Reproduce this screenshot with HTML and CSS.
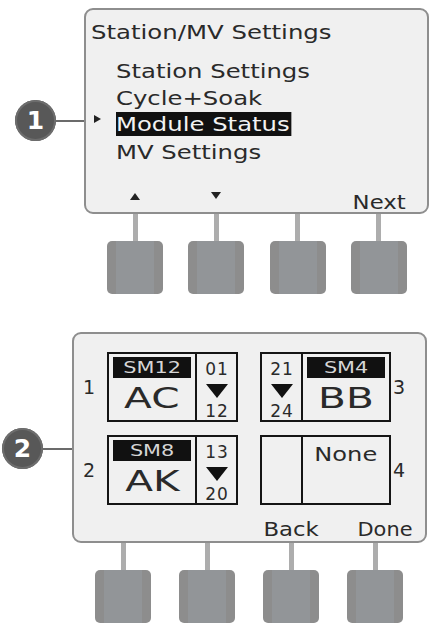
FILE: index.html
```html
<!DOCTYPE html>
<html lang="en">
<head>
  <meta charset="UTF-8">
  <title>Module Status</title>
  <link rel="stylesheet" href="styles.css">
</head>
<body>

  <div class="panel panel-menu">
    <div class="callout">
      <span class="callout-num">1</span>
      <span class="callout-line"></span>
    </div>
    <div class="unit">
      <div class="screen screen-menu">
        <div class="screen-title"><span>Station/MV Settings</span></div>
        <ul class="menu">
          <li><span class="menu-text">Station Settings</span></li>
          <li><span class="menu-text">Cycle+Soak</span></li>
          <li class="selected"><span class="menu-text">Module Status</span></li>
          <li><span class="menu-text">MV Settings</span></li>
        </ul>
        <div class="softkeys">
          <span class="softkey"><i class="tri-up"></i></span>
          <span class="softkey"><i class="tri-down"></i></span>
          <span class="softkey"></span>
          <span class="softkey"><span class="softkey-text">Next</span></span>
        </div>
      </div>
      <div class="keys">
        <div class="key"></div>
        <div class="key"></div>
        <div class="key"></div>
        <div class="key"></div>
      </div>
    </div>
  </div>

  <div class="panel panel-modules">
    <div class="callout">
      <span class="callout-num">2</span>
      <span class="callout-line"></span>
    </div>
    <div class="unit">
      <div class="screen screen-modules">
        <div class="mod-row">
          <span class="slot-num">1</span>
          <div class="mod">
            <div class="mod-main">
              <div class="mod-label"><span>SM12</span></div>
              <div class="mod-code"><span>AC</span></div>
            </div>
            <div class="mod-range"><span>01</span><i class="tri-range"></i><span>12</span></div>
          </div>
          <div class="mod mod-flip">
            <div class="mod-range"><span>21</span><i class="tri-range"></i><span>24</span></div>
            <div class="mod-main">
              <div class="mod-label"><span>SM4</span></div>
              <div class="mod-code"><span>BB</span></div>
            </div>
          </div>
          <span class="slot-num slot-num-right">3</span>
        </div>
        <div class="mod-row">
          <span class="slot-num">2</span>
          <div class="mod">
            <div class="mod-main">
              <div class="mod-label"><span>SM8</span></div>
              <div class="mod-code"><span>AK</span></div>
            </div>
            <div class="mod-range"><span>13</span><i class="tri-range"></i><span>20</span></div>
          </div>
          <div class="mod mod-flip">
            <div class="mod-range"></div>
            <div class="mod-main">
              <div class="mod-none"><span>None</span></div>
            </div>
          </div>
          <span class="slot-num slot-num-right">4</span>
        </div>
        <div class="softkeys">
          <span class="softkey"></span>
          <span class="softkey"></span>
          <span class="softkey"><span class="softkey-text">Back</span></span>
          <span class="softkey softkey-shift"><span class="softkey-text">Done</span></span>
        </div>
      </div>
      <div class="keys">
        <div class="key"></div>
        <div class="key"></div>
        <div class="key"></div>
        <div class="key"></div>
      </div>
    </div>
  </div>

</body>
</html>
```

FILE: styles.css
```css
body {
  margin: 0;
  padding-top: 8px;
  background: #fff;
  font-family: "DejaVu Sans", Verdana, sans-serif;
  color: #2a2a2a;
}
.panel {
  display: flex;
  align-items: flex-start;
}
.panel-menu {
  padding-left: 15px;
}
.panel-modules {
  padding-left: 2px;
  margin-top: 38px;
}

/* numbered callouts */
.callout {
  display: flex;
  align-items: center;
  margin-top: 92px;
}
.panel-modules .callout {
  margin-top: 96px;
}
.callout-num {
  width: 41px;
  height: 41px;
  border-radius: 50%;
  background: #585858;
  box-shadow: inset 0 0 0 2px #6d6d6d;
  color: #fff;
  font-weight: bold;
  font-size: 25px;
  display: flex;
  align-items: center;
  justify-content: center;
}
.callout-line {
  width: 28px;
  height: 2px;
  background: #6b6b6b;
}
.panel-modules .callout-line {
  width: 29px;
}

/* lcd screen - the lcd font is wide, so text is stretched */
.unit {
  width: 345px;
}
.panel-modules .unit {
  width: 355px;
}
.screen {
  box-sizing: border-box;
  border: 2px solid #8e8e8e;
  border-radius: 9px;
  background: #f0f0f0;
  display: flex;
  flex-direction: column;
}
.screen-menu {
  height: 206px;
  padding-top: 10px;
}
.screen-modules {
  height: 211px;
  padding: 18px 0 2px;
}
.screen-title {
  padding-left: 5px;
  font-size: 20px;
  line-height: 24px;
}
.screen-title span {
  display: inline-block;
  transform: scaleX(1.22);
  transform-origin: left center;
}
.menu {
  list-style: none;
  margin: 14px 0 0;
  padding: 0;
}
.menu li {
  display: flex;
  align-items: flex-start;
  height: 27px;
  line-height: 27px;
  padding-left: 30px;
  font-size: 19px;
}
.menu-text {
  transform: scaleX(1.28);
  transform-origin: left center;
}
.menu li.selected::before {
  content: "";
  margin: 3px 15px 0 -22px;
  border-left: 7px solid #222;
  border-top: 4px solid transparent;
  border-bottom: 4px solid transparent;
}
.menu li.selected .menu-text {
  background: #111;
  color: #f2f2f2;
  line-height: 23px;
  padding: 1px 1px 0 0;
}

/* soft key labels */
.softkeys {
  margin-top: auto;
  display: flex;
  justify-content: space-between;
  padding: 0 20px 0 21px;
  height: 20px;
  line-height: 20px;
  font-size: 19px;
}
.screen-modules .softkeys {
  padding: 0 22px 0 21px;
}
.softkey {
  width: 56px;
  display: flex;
  justify-content: center;
  align-items: flex-start;
  white-space: nowrap;
}
.softkey-text {
  transform: scaleX(1.2);
}
.softkey-shift .softkey-text {
  margin-left: 20px;
  transform: scaleX(1.1);
}
.tri-up {
  margin-top: 1px;
  border-left: 5px solid transparent;
  border-right: 5px solid transparent;
  border-bottom: 7px solid #222;
}
.tri-down {
  border-left: 5px solid transparent;
  border-right: 5px solid transparent;
  border-top: 7px solid #222;
}

/* hardware keys */
.keys {
  display: flex;
  justify-content: space-between;
  padding: 0 22px 0 23px;
}
.panel-modules .keys {
  padding: 0 24px 0 23px;
}
.key {
  width: 56px;
  display: flex;
  flex-direction: column;
  align-items: center;
}
.key::before {
  content: "";
  width: 5px;
  height: 27px;
  background: #adadad;
}
.key::after {
  content: "";
  width: 56px;
  height: 53px;
  border-radius: 5px;
  background: linear-gradient(to right, #8d8d8d 0 9px, #929598 9px calc(100% - 9px), #8d8d8d calc(100% - 9px));
}

/* module status grid */
.mod-row {
  display: flex;
  align-items: center;
  padding-left: 9px;
}
.mod-row + .mod-row {
  margin-top: 13px;
}
.slot-num {
  width: 24px;
  font-size: 19px;
}
.slot-num-right {
  margin-left: 2px;
}
.mod {
  box-sizing: border-box;
  display: flex;
  width: 131px;
  height: 70px;
  border: 2px solid #151515;
}
.mod + .mod {
  margin-left: 22px;
}
.mod-main {
  width: 86px;
}
.mod-range {
  width: 39px;
  border-left: 2px solid #151515;
  display: flex;
  flex-direction: column;
  align-items: center;
  padding-top: 7px;
  font-size: 17px;
  line-height: 16px;
  letter-spacing: 1px;
  text-indent: 1px;
}
.mod-flip .mod-range {
  border-left: 0;
  border-right: 2px solid #151515;
}
.tri-range {
  margin: 7px 0 5px;
  border-left: 11px solid transparent;
  border-right: 11px solid transparent;
  border-top: 14px solid #111;
}
.mod-label,
.mod-code,
.mod-none {
  display: flex;
  justify-content: center;
}
.mod-label {
  margin: 3px 4px 0;
  height: 21px;
  line-height: 21px;
  background: #111;
  color: #d6d6d6;
  font-size: 16px;
}
.mod-label span {
  transform: scaleX(1.3);
}
.mod-code {
  margin-top: 5px;
  font-size: 29px;
  line-height: 30px;
}
.mod-code span {
  transform: scaleX(1.4);
}
.mod-none {
  padding-top: 6px;
  font-size: 19px;
  line-height: 22px;
}
.mod-none span {
  transform: scaleX(1.27);
}
```
